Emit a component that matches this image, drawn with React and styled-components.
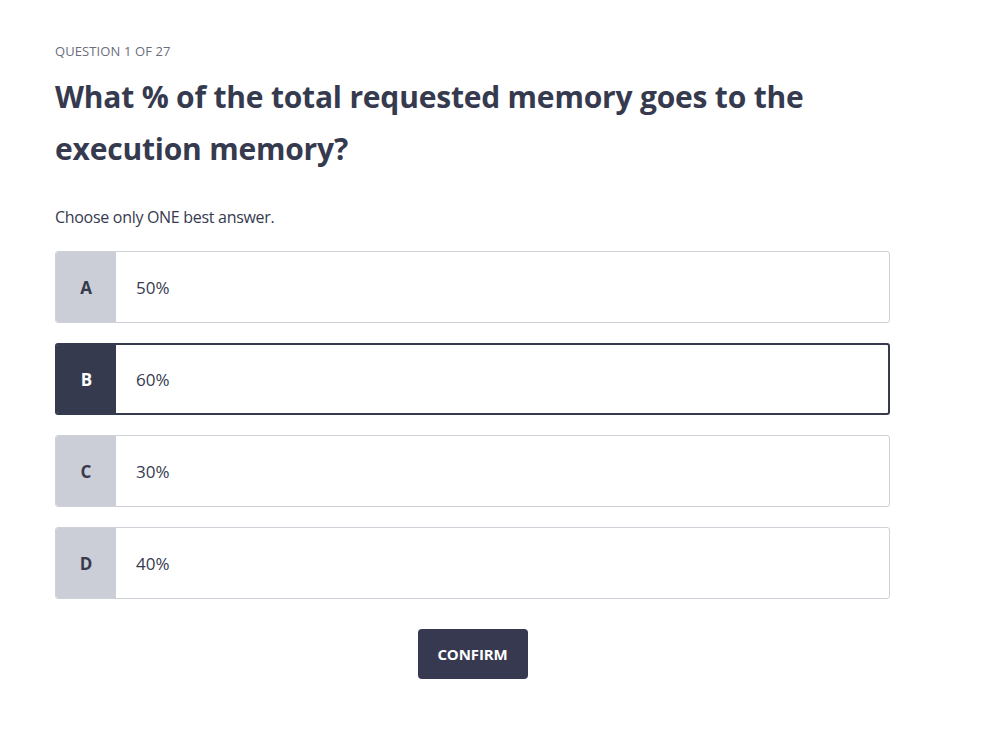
import React, { useState } from 'react';
import styled, { createGlobalStyle } from 'styled-components';

const GlobalStyle = createGlobalStyle`
    body {
        margin: 0;
        background: #ffffff;
        font-family: 'Open Sans', 'Noto Sans', sans-serif;
        color: #363a4f;
    }
`;

const options = [
    { key: 'A', text: '50%' },
    { key: 'B', text: '60%' },
    { key: 'C', text: '30%' },
    { key: 'D', text: '40%' },
];

function App() {
    const [selected, setSelected] = useState('B');

    return (
        <Page>
            <GlobalStyle />
            <Counter>QUESTION 1 OF 27</Counter>
            <Title>What % of the total requested memory goes to the execution memory?</Title>
            <Hint>Choose only ONE best answer.</Hint>
            <OptionList>
                {options.map((opt) => (
                    <Option key={opt.key} $active={selected === opt.key} onClick={() => setSelected(opt.key)}>
                        <Letter $active={selected === opt.key}>{opt.key}</Letter>
                        <OptionText>{opt.text}</OptionText>
                    </Option>
                ))}
            </OptionList>
            <Actions>
                <ConfirmButton>CONFIRM</ConfirmButton>
            </Actions>
        </Page>
    );
}

const Page = styled.div`
    width: 835px;
    padding: 42px 0 0 55px;
`;

const Counter = styled.div`
    font-size: 13px;
    color: #6b6e7c;
    letter-spacing: 0.1px;
`;

const Title = styled.h1`
    margin: 11px 0 0;
    font-size: 30px;
    line-height: 52px;
    font-weight: 700;
    color: #363a4f;
    letter-spacing: -0.2px;
    max-width: 800px;
`;

const Hint = styled.p`
    margin: 31px 0 0;
    font-size: 16px;
    color: #363a4f;
    letter-spacing: -0.3px;
`;

const OptionList = styled.div`
    display: flex;
    flex-direction: column;
    gap: 20px;
    margin-top: 23px;
`;

const Option = styled.div`
    display: flex;
    align-items: stretch;
    height: 72px;
    box-sizing: border-box;
    border: ${(p) => (p.$active ? '2px solid #363a4f' : '1px solid #cfd1d8')};
    border-radius: 3px;
    overflow: hidden;
    cursor: pointer;
    background: #ffffff;
`;

const Letter = styled.div`
    width: ${(p) => (p.$active ? '59px' : '60px')};
    display: flex;
    align-items: center;
    justify-content: center;
    font-size: 17px;
    font-weight: 700;
    background: ${(p) => (p.$active ? '#363a4f' : '#cbced6')};
    color: ${(p) => (p.$active ? '#ffffff' : '#363a4f')};
`;

const OptionText = styled.div`
    display: flex;
    align-items: center;
    padding-left: 20px;
    font-size: 17px;
    color: #363a4f;
    letter-spacing: 0;
`;

const Actions = styled.div`
    display: flex;
    justify-content: center;
    margin-top: 30px;
`;

const ConfirmButton = styled.button`
    width: 110px;
    height: 50px;
    border: none;
    border-radius: 4px;
    background: #363950;
    color: #ffffff;
    font-family: 'Open Sans', 'Noto Sans', sans-serif;
    font-size: 15px;
    font-weight: 700;
    letter-spacing: -0.1px;
    cursor: pointer;
`;

export default App;
